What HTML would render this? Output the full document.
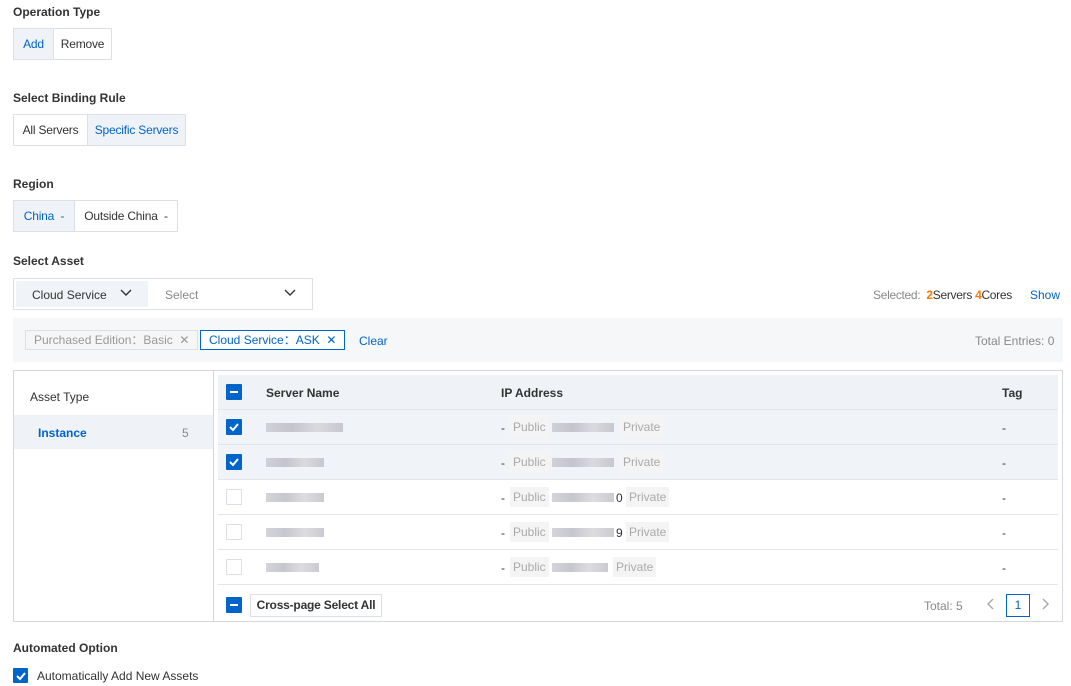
<!DOCTYPE html>
<html><head><meta charset="utf-8"><style>
*{box-sizing:border-box;margin:0;padding:0}
body{width:1071px;height:686px;background:#fff;font-family:"Liberation Sans",sans-serif;font-size:12px;color:#333;position:relative;overflow:hidden}
.a{position:absolute}
.lbl{position:absolute;left:13px;font-size:12px;font-weight:bold;color:#333}
.seg{position:absolute;display:flex;border:1px solid #dcdfe6;height:32px}
.seg div{line-height:30px;color:#333;text-align:center;white-space:nowrap;letter-spacing:-0.2px}
.seg .on{background:#eff3f8;color:#0064c8}
.seg .b{border-left:1px solid #dcdfe6}
.chk{position:absolute;width:16px;height:16px;border:1px solid #dcdfe6;background:#fff;border-radius:1px}
.chk.on{background:#0064c8;border-color:#0064c8}
.blur{position:absolute;height:9px;background:linear-gradient(90deg,#c9c9d0,#b8b8c2,#d4d4d8,#bcbcc5);opacity:.8}
.row{position:absolute;left:218px;width:840px;height:35px;border-bottom:1px solid #e3e5ea}
.pill{position:absolute;background:#f4f4f5;color:#aaa;padding:0 3px;line-height:20px}
</style></head><body>
<div class="lbl" style="top:5px">Operation Type</div>
<div class="seg" style="left:13px;top:28px"><div class="on" style="width:39px">Add</div><div class="b" style="width:58px">Remove</div></div>
<div class="lbl" style="top:91px">Select Binding Rule</div>
<div class="seg" style="left:13px;top:114px"><div style="width:73px">All Servers</div><div class="on b" style="width:98px">Specific Servers</div></div>
<div class="lbl" style="top:177px">Region</div>
<div class="seg" style="left:13px;top:200px"><div class="on" style="width:60px">China&nbsp; -</div><div class="b" style="width:103px">Outside China&nbsp; -</div></div>
<div class="lbl" style="top:254px">Select Asset</div>
<div class="a" style="left:13px;top:278px;width:300px;height:32px;border:1px solid #dcdfe6"></div>
<div class="a" style="left:16px;top:281px;width:132px;height:26px;background:#f0f3f7;border-radius:2px"></div>
<div class="a" style="left:32px;top:288px">Cloud Service</div>
<svg class="a" style="left:120px;top:289px" width="12" height="8"><path d="M1 1l5 5 5-5" stroke="#333" stroke-width="1.4" fill="none"/></svg>
<div class="a" style="left:165px;top:288px;color:#888">Select</div>
<svg class="a" style="left:284px;top:289px" width="12" height="8"><path d="M1 1l5 5 5-5" stroke="#333" stroke-width="1.4" fill="none"/></svg>
<div class="a" style="left:873px;top:288px;color:#888;letter-spacing:-0.3px">Selected:&nbsp; <b style="color:#ff7a00">2</b><span style="color:#333">Servers </span><b style="color:#ff7a00">4</b><span style="color:#333">Cores</span></div>
<div class="a" style="left:1030px;top:288px;color:#0064c8">Show</div>
<div class="a" style="left:13px;top:318px;width:1050px;height:44px;background:#f6f7f9"></div>
<div class="a" style="left:25px;top:330px;height:20px;border:1px solid #dcdfe6;background:#f6f6f6;color:#999;padding:0 8px;line-height:18px">Purchased Edition：Basic&nbsp; ✕</div>
<div class="a" style="left:200px;top:330px;height:20px;border:1px solid #0064c8;background:#fff;color:#0064c8;padding:0 8px;line-height:18px">Cloud Service：ASK&nbsp; ✕</div>
<div class="a" style="left:359px;top:334px;color:#0064c8">Clear</div>
<div class="a" style="left:975px;top:334px;color:#888">Total Entries: 0</div>
<div class="a" style="left:13px;top:370px;width:1050px;height:252px;border:1px solid #d4d7dd"></div>
<div class="a" style="left:213px;top:371px;width:1px;height:250px;background:#d4d7dd"></div>
<div class="a" style="left:30px;top:390px">Asset Type</div>
<div class="a" style="left:14px;top:415px;width:199px;height:34px;background:#eff3f8"></div>
<div class="a" style="left:38px;top:426px;color:#0064c8;font-weight:bold">Instance</div>
<div class="a" style="left:182px;top:426px;color:#888">5</div>
<div class="row" style="top:375px;background:#eff3f8"></div>
<div class="row" style="top:410px;background:#f0f3f8"></div>
<div class="row" style="top:445px;background:#f0f3f8"></div>
<div class="row" style="top:480px"></div>
<div class="row" style="top:515px"></div>
<div class="row" style="top:550px"></div>
<div class="chk on" style="left:226px;top:384px"><div class="a" style="left:3px;top:6px;width:8px;height:2px;background:#fff"></div></div>
<div class="a" style="left:266px;top:386px;font-weight:bold">Server Name</div>
<div class="a" style="left:501px;top:386px;font-weight:bold">IP Address</div>
<div class="a" style="left:1002px;top:386px;font-weight:bold">Tag</div>
<div class="chk on" style="left:226px;top:419px"><svg width="14" height="14" class="a"><path d="M3 7l3 3 5-6" stroke="#fff" stroke-width="2" fill="none"/></svg></div>
<div class="chk on" style="left:226px;top:454px"><svg width="14" height="14" class="a"><path d="M3 7l3 3 5-6" stroke="#fff" stroke-width="2" fill="none"/></svg></div>
<div class="chk" style="left:226px;top:489px"></div>
<div class="chk" style="left:226px;top:524px"></div>
<div class="chk" style="left:226px;top:559px"></div>
<div class="blur" style="left:266px;top:423px;width:77px"></div>
<div class="blur" style="left:266px;top:458px;width:58px"></div>
<div class="blur" style="left:266px;top:493px;width:58px"></div>
<div class="blur" style="left:266px;top:528px;width:58px"></div>
<div class="blur" style="left:266px;top:563px;width:53px"></div>

<div class="a" style="left:501px;top:421px">-</div><div class="pill" style="left:510px;top:417px">Public</div><div class="blur" style="left:552px;top:423px;width:62px"></div><div class="pill" style="left:620px;top:417px">Private</div>
<div class="a" style="left:501px;top:456px">-</div><div class="pill" style="left:510px;top:452px">Public</div><div class="blur" style="left:552px;top:458px;width:62px"></div><div class="pill" style="left:620px;top:452px">Private</div>
<div class="a" style="left:501px;top:491px">-</div><div class="pill" style="left:510px;top:487px">Public</div><div class="blur" style="left:552px;top:493px;width:62px"></div><div class="a" style="left:616px;top:491px">0</div><div class="pill" style="left:626px;top:487px">Private</div>
<div class="a" style="left:501px;top:526px">-</div><div class="pill" style="left:510px;top:522px">Public</div><div class="blur" style="left:552px;top:528px;width:62px"></div><div class="a" style="left:616px;top:526px">9</div><div class="pill" style="left:626px;top:522px">Private</div>
<div class="a" style="left:501px;top:561px">-</div><div class="pill" style="left:510px;top:557px">Public</div><div class="blur" style="left:552px;top:563px;width:56px"></div><div class="pill" style="left:613px;top:557px">Private</div>
<div class="a" style="left:1002px;top:421px">-</div><div class="a" style="left:1002px;top:456px">-</div><div class="a" style="left:1002px;top:491px">-</div><div class="a" style="left:1002px;top:526px">-</div><div class="a" style="left:1002px;top:561px">-</div>
<div class="chk on" style="left:226px;top:597px"><div class="a" style="left:3px;top:6px;width:8px;height:2px;background:#fff"></div></div>
<div class="a" style="left:250px;top:594px;width:132px;height:23px;border:1px solid #dcdfe6;line-height:21px;text-align:center;font-weight:bold;letter-spacing:-0.2px">Cross-page Select All</div>
<div class="a" style="left:924px;top:599px;color:#888">Total: 5</div>
<svg class="a" style="left:986px;top:598px" width="8" height="12"><path d="M7 1L2 6l5 5" stroke="#aaa" stroke-width="1.4" fill="none"/></svg>
<div class="a" style="left:1006px;top:594px;width:24px;height:23px;border:1px solid #0064c8;color:#0064c8;text-align:center;line-height:21px">1</div>
<svg class="a" style="left:1042px;top:598px" width="8" height="12"><path d="M1 1l5 5-5 5" stroke="#aaa" stroke-width="1.4" fill="none"/></svg>
<div class="lbl" style="top:641px">Automated Option</div>
<div class="chk on" style="left:13px;top:668px;width:15px;height:15px"><svg width="14" height="14" class="a"><path d="M3 7l3 3 5-6" stroke="#fff" stroke-width="2" fill="none"/></svg></div>
<div class="a" style="left:37px;top:669px">Automatically Add New Assets</div>
</body></html>
